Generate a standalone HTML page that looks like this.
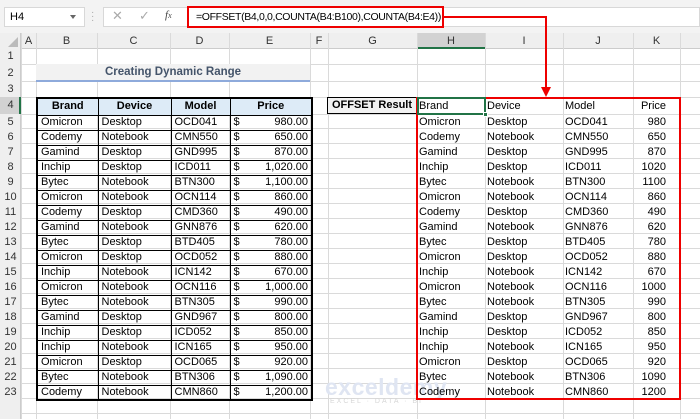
<!DOCTYPE html>
<html><head><meta charset="utf-8"><style>
*{margin:0;padding:0;box-sizing:border-box}
body{width:700px;height:419px;overflow:hidden;background:#fff;font-family:"Liberation Sans",sans-serif;font-size:11px;color:#000;position:relative}
.a{position:absolute}
.vl{position:absolute;top:33px;bottom:0;width:1px;background:#dadada}
.hl{position:absolute;left:0;right:0;height:1px;background:#dadada}
.ch{position:absolute;top:33px;height:16px;line-height:16px;text-align:center;color:#333;font-size:11px}
.rh{position:absolute;left:0;width:21px;text-align:center;color:#333;font-size:11px}
table{border-collapse:collapse;position:absolute;table-layout:fixed}
#L td{border:1px solid #000;height:15px;padding:0 3px;line-height:13px;white-space:nowrap;overflow:hidden}
#L{border:2px solid #000}
#L tr.h td{height:17px;background:#ddebf7;font-weight:bold;text-align:center}
#L td:nth-child(4){text-align:right}
#L td:nth-child(4) b{float:left;font-weight:normal}
#R td{height:15px;padding:0 2px;line-height:15px;white-space:nowrap}
#R tr.h td{height:17px}
#R td:nth-child(4){text-align:right;padding-right:14px}
</style></head><body>
<div class="a" style="left:0;top:0;width:700px;height:33px;background:#f3f3f3"></div>
<div class="a" style="left:4px;top:7px;width:81px;height:20px;background:#fff;border:1px solid #d8d8d8;line-height:18px;padding-left:5px">H4</div>
<div class="a" style="left:70px;top:15px;width:0;height:0;border-left:3px solid transparent;border-right:3px solid transparent;border-top:4px solid #666"></div>
<div class="a" style="left:91px;top:11px;color:#aaa;font-size:10px;line-height:4px">·<br>·<br>·</div>
<div class="a" style="left:103px;top:7px;width:597px;height:20px;background:#fff;border:1px solid #d8d8d8"></div>
<div class="a" style="left:112px;top:8px;color:#aaa;font-size:13px">✕</div>
<div class="a" style="left:139px;top:8px;color:#aaa;font-size:13px">✓</div>
<div class="a" style="left:165px;top:9px;color:#444;font-size:11px;font-style:italic;font-family:'Liberation Serif',serif">f<span style="font-size:8px">x</span></div>
<div class="a" style="left:187px;top:6px;width:257px;height:22px;border:2px solid #e00;background:#fff;line-height:18px;padding-left:7px;font-size:10.5px;letter-spacing:-0.35px;white-space:nowrap;overflow:hidden">=OFFSET(B4,0,0,COUNTA(B4:B100),COUNTA(B4:E4))</div>
<div class="a" style="left:0;top:33px;width:700px;height:16px;background:#efefef;border-bottom:1px solid #ccc"></div>
<div class="a" style="left:0;top:33px;width:21px;height:386px;background:#efefef;border-right:1px solid #ccc"></div>
<div class="a" style="left:8px;top:37px;width:0;height:0;border-left:10px solid transparent;border-bottom:10px solid #bbb"></div>
<div class="a" style="left:417px;top:33px;width:68px;height:16px;background:#d2d2d2;border-bottom:2px solid #217346"></div>
<div class="vl" style="left:21px"></div><div class="vl" style="left:36px"></div><div class="vl" style="left:97px"></div><div class="vl" style="left:170px"></div><div class="vl" style="left:229px"></div><div class="vl" style="left:310px"></div><div class="vl" style="left:328px"></div><div class="vl" style="left:417px"></div><div class="vl" style="left:485px"></div><div class="vl" style="left:563px"></div><div class="vl" style="left:633px"></div><div class="vl" style="left:680px"></div>
<div class="hl" style="top:64px"></div><div class="hl" style="top:81px"></div><div class="hl" style="top:97px"></div><div class="hl" style="top:114px"></div>
<div class="a" style="left:0;right:0;top:114px;height:300px;background:repeating-linear-gradient(to bottom,transparent 0,transparent 14px,#dadada 14px,#dadada 15px)"></div>
<div class="ch" style="left:21px;width:15px">A</div><div class="ch" style="left:36px;width:61px">B</div><div class="ch" style="left:97px;width:73px">C</div><div class="ch" style="left:170px;width:59px">D</div><div class="ch" style="left:229px;width:81px">E</div><div class="ch" style="left:310px;width:18px">F</div><div class="ch" style="left:328px;width:89px">G</div><div class="ch" style="left:417px;width:68px">H</div><div class="ch" style="left:485px;width:78px">I</div><div class="ch" style="left:563px;width:70px">J</div><div class="ch" style="left:633px;width:47px">K</div>
<div class="a" style="left:0;top:49px;width:21px;background:#efefef;height:370px;border-right:1px solid #ccc"></div>
<div class="a" style="left:0;top:97px;width:21px;height:17px;background:#d2d2d2;border-right:2px solid #217346"></div>
<div class="rh" style="top:50px">1</div><div class="rh" style="top:67px">2</div><div class="rh" style="top:83px">3</div><div class="rh" style="top:99px">4</div>
<div class="a" style="left:0;top:115px;width:21px;line-height:15px;text-align:center;color:#333">5<br>6<br>7<br>8<br>9<br>10<br>11<br>12<br>13<br>14<br>15<br>16<br>17<br>18<br>19<br>20<br>21<br>22<br>23</div>
<div class="a" style="left:36px;top:64px;width:274px;height:18px;background:#f2f2f2;border-bottom:2px solid #8eaadb;text-align:center;font-weight:bold;color:#44546a;font-size:11.5px;line-height:17px">Creating Dynamic Range</div>
<div class="a" style="left:327px;top:97px;width:90px;height:17px;background:#f2f2f2;border:1px solid #000;text-align:center;font-weight:bold;line-height:15px">OFFSET Result</div>
<table id="L" style="left:36px;top:97px;width:275px">
<colgroup><col style="width:61px"><col style="width:73px"><col style="width:59px"><col style="width:82px"></colgroup>
<tr class="h"><td>Brand</td><td>Device</td><td>Model</td><td style="text-align:center">Price</td></tr>
<tr><td>Omicron</td><td>Desktop</td><td>OCD041</td><td><b>$</b>980.00</td></tr>
<tr><td>Codemy</td><td>Notebook</td><td>CMN550</td><td><b>$</b>650.00</td></tr>
<tr><td>Gamind</td><td>Desktop</td><td>GND995</td><td><b>$</b>870.00</td></tr>
<tr><td>Inchip</td><td>Desktop</td><td>ICD011</td><td><b>$</b>1,020.00</td></tr>
<tr><td>Bytec</td><td>Notebook</td><td>BTN300</td><td><b>$</b>1,100.00</td></tr>
<tr><td>Omicron</td><td>Notebook</td><td>OCN114</td><td><b>$</b>860.00</td></tr>
<tr><td>Codemy</td><td>Desktop</td><td>CMD360</td><td><b>$</b>490.00</td></tr>
<tr><td>Gamind</td><td>Notebook</td><td>GNN876</td><td><b>$</b>620.00</td></tr>
<tr><td>Bytec</td><td>Desktop</td><td>BTD405</td><td><b>$</b>780.00</td></tr>
<tr><td>Omicron</td><td>Desktop</td><td>OCD052</td><td><b>$</b>880.00</td></tr>
<tr><td>Inchip</td><td>Notebook</td><td>ICN142</td><td><b>$</b>670.00</td></tr>
<tr><td>Omicron</td><td>Notebook</td><td>OCN116</td><td><b>$</b>1,000.00</td></tr>
<tr><td>Bytec</td><td>Notebook</td><td>BTN305</td><td><b>$</b>990.00</td></tr>
<tr><td>Gamind</td><td>Desktop</td><td>GND967</td><td><b>$</b>800.00</td></tr>
<tr><td>Inchip</td><td>Desktop</td><td>ICD052</td><td><b>$</b>850.00</td></tr>
<tr><td>Inchip</td><td>Notebook</td><td>ICN165</td><td><b>$</b>950.00</td></tr>
<tr><td>Omicron</td><td>Desktop</td><td>OCD065</td><td><b>$</b>920.00</td></tr>
<tr><td>Bytec</td><td>Notebook</td><td>BTN306</td><td><b>$</b>1,090.00</td></tr>
<tr><td>Codemy</td><td>Notebook</td><td>CMN860</td><td><b>$</b>1,200.00</td></tr>
</table>
<div class="a" style="left:325px;top:374px;color:#dfe5f2;font-weight:bold;font-size:23px;letter-spacing:0.5px">exceldemy</div>
<div class="a" style="left:330px;top:398px;color:#d6d6d6;font-size:7px;letter-spacing:2px">EXCEL · DATA · BI</div>
<div class="a" style="left:416px;top:97px;width:265px;height:303px;border:2px solid #e00"></div>
<div class="a" style="left:417px;top:97px;width:69px;height:18px;border:2px solid #217346"></div>
<div class="a" style="left:483px;top:112px;width:5px;height:5px;background:#217346;border:1px solid #fff"></div>
<table id="R" style="left:417px;top:98px;width:263px">
<colgroup><col style="width:68px"><col style="width:78px"><col style="width:70px"><col style="width:47px"></colgroup>
<tr class="h"><td>Brand</td><td>Device</td><td>Model</td><td>Price</td></tr>
<tr><td>Omicron</td><td>Desktop</td><td>OCD041</td><td>980</td></tr>
<tr><td>Codemy</td><td>Notebook</td><td>CMN550</td><td>650</td></tr>
<tr><td>Gamind</td><td>Desktop</td><td>GND995</td><td>870</td></tr>
<tr><td>Inchip</td><td>Desktop</td><td>ICD011</td><td>1020</td></tr>
<tr><td>Bytec</td><td>Notebook</td><td>BTN300</td><td>1100</td></tr>
<tr><td>Omicron</td><td>Notebook</td><td>OCN114</td><td>860</td></tr>
<tr><td>Codemy</td><td>Desktop</td><td>CMD360</td><td>490</td></tr>
<tr><td>Gamind</td><td>Notebook</td><td>GNN876</td><td>620</td></tr>
<tr><td>Bytec</td><td>Desktop</td><td>BTD405</td><td>780</td></tr>
<tr><td>Omicron</td><td>Desktop</td><td>OCD052</td><td>880</td></tr>
<tr><td>Inchip</td><td>Notebook</td><td>ICN142</td><td>670</td></tr>
<tr><td>Omicron</td><td>Notebook</td><td>OCN116</td><td>1000</td></tr>
<tr><td>Bytec</td><td>Notebook</td><td>BTN305</td><td>990</td></tr>
<tr><td>Gamind</td><td>Desktop</td><td>GND967</td><td>800</td></tr>
<tr><td>Inchip</td><td>Desktop</td><td>ICD052</td><td>850</td></tr>
<tr><td>Inchip</td><td>Notebook</td><td>ICN165</td><td>950</td></tr>
<tr><td>Omicron</td><td>Desktop</td><td>OCD065</td><td>920</td></tr>
<tr><td>Bytec</td><td>Notebook</td><td>BTN306</td><td>1090</td></tr>
<tr><td>Codemy</td><td>Notebook</td><td>CMN860</td><td>1200</td></tr>
</table>
<svg class="a" style="left:0;top:0" width="700" height="419">
<path d="M444 17 H546 V88" fill="none" stroke="#e00" stroke-width="2"/>
<path d="M541 87 L551 87 L546 97 Z" fill="#e00"/>
</svg>
</body></html>
